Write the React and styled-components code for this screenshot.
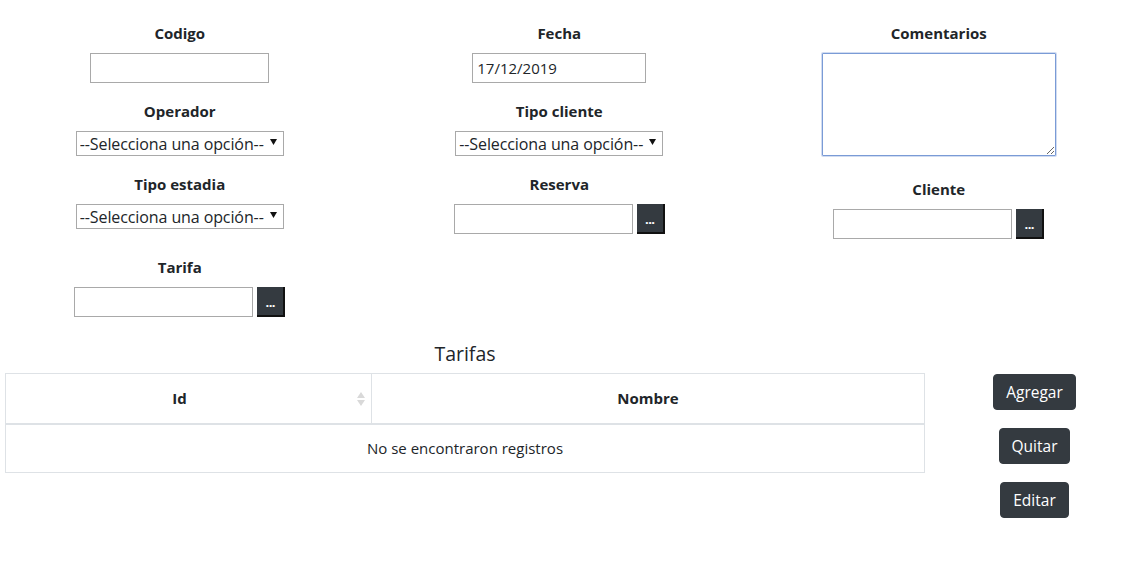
import React from "react";
import styled, { createGlobalStyle } from "styled-components";

const Global = createGlobalStyle`
  * { box-sizing: border-box; }
  body {
    margin: 0;
    background: #fff;
    color: #212529;
    font-family: "Open Sans", "Noto Sans", sans-serif;
    font-size: 15px;
  }
`;

const Page = styled.div`
  width: 1122px;
  padding-top: 21px;
`;

const FormGrid = styled.div`
  display: grid;
  grid-template-columns: repeat(3, 379.5px);
  margin-left: -10px;
`;

const Column = styled.div`
  display: flex;
  flex-direction: column;
  align-items: center;
`;

const Field = styled.div`
  display: flex;
  flex-direction: column;
  align-items: center;
  margin-top: ${(p) => p.$mt || 0}px;
`;

const Label = styled.label`
  font-weight: 700;
  font-size: 15px;
  line-height: 24px;
  margin-bottom: 8px;
`;

const TextInput = styled.input`
  width: ${(p) => p.$w || 179}px;
  height: 30px;
  border: 1px solid #a9a9a9;
  padding: 0 4px;
  font-family: inherit;
  font-size: 15px;
  color: #212529;
  background: #fff;
  outline: none;
`;

const SelectWrap = styled.div`
  position: relative;
  width: 208px;
  height: 25px;
`;

const Select = styled.select`
  appearance: none;
  width: 100%;
  height: 100%;
  border: 1px solid #a9a9a9;
  border-radius: 0;
  background: #fff;
  padding: 0 18px 0 3px;
  font-family: inherit;
  font-size: 16px;
  letter-spacing: -0.1px;
  color: #212529;
  outline: none;
`;

const Arrow = styled.svg`
  position: absolute;
  right: 7px;
  top: 8px;
  pointer-events: none;
`;

const TextArea = styled.textarea`
  width: 234px;
  height: 103px;
  border: 1px solid #7a9bd6;
  box-shadow: 0 0 0 1px rgba(122, 155, 214, 0.35);
  border-radius: 1px;
  font-family: inherit;
  font-size: 15px;
  padding: 2px 3px;
  outline: none;
  resize: both;
`;

const InputGroup = styled.div`
  display: flex;
  align-items: stretch;
  gap: 4px;
`;

const DotsButton = styled.button`
  width: 28px;
  height: 30px;
  background: #343a40;
  color: #fff;
  border: none;
  border-right: 2px solid #111;
  border-bottom: 2px solid #111;
  padding: 0;
  font-family: inherit;
  font-size: 13px;
  font-weight: 700;
  line-height: 1;
  display: flex;
  align-items: flex-end;
  justify-content: center;
  padding-bottom: 6px;
  letter-spacing: -0.5px;
`;

const TableSection = styled.div`
  display: flex;
  margin-top: 25px;
`;

const TableWrap = styled.div`
  margin-left: 5px;
  width: 920px;
`;

const Title = styled.h3`
  margin: 0 0 7px;
  font-size: 19.5px;
  font-weight: 400;
  line-height: 24px;
  text-align: center;
`;

const Table = styled.table`
  width: 100%;
  border-collapse: collapse;
  border: 1px solid #dee2e6;
`;

const Th = styled.th`
  position: relative;
  height: 50px;
  padding: 0 ${(p) => (p.$sortable ? 30 : 12)}px 0 12px;
  font-weight: 700;
  font-size: 15px;
  text-align: center;
  border-bottom: 2px solid #dee2e6;
  border-left: 1px solid #dee2e6;
  width: ${(p) => p.$w || "auto"};
`;

const SortIcon = styled.svg`
  position: absolute;
  right: 6px;
  top: 18px;
`;

const Td = styled.td`
  height: 49px;
  text-align: center;
  font-size: 15px;
  padding: 0 12px;
`;

const ButtonColumn = styled.div`
  width: 175px;
  margin-left: 22px;
  padding-top: 32px;
  display: flex;
  flex-direction: column;
  align-items: center;
  gap: 18px;
`;

const DarkButton = styled.button`
  background: #343a40;
  color: #fff;
  border: 1px solid #343a40;
  border-radius: 4px;
  padding: 0 12px;
  height: 36px;
  font-family: inherit;
  font-size: 15.5px;
  line-height: 24px;
`;

const SelectField = ({ label, mt }) => (
  <Field $mt={mt}>
    <Label>{label}</Label>
    <SelectWrap>
      <Select defaultValue="">
        <option value="">--Selecciona una opción--</option>
      </Select>
      <Arrow width="7" height="6" viewBox="0 0 7 6">
        <path d="M0 0 H7 L3.5 6 Z" fill="#111" />
      </Arrow>
    </SelectWrap>
  </Field>
);

const LookupField = ({ label, mt }) => (
  <Field $mt={mt}>
    <Label>{label}</Label>
    <InputGroup>
      <TextInput />
      <DotsButton>...</DotsButton>
    </InputGroup>
  </Field>
);

export default function App() {
  return (
    <>
      <Global />
      <Page>
        <FormGrid>
          <Column>
            <Field>
              <Label>Codigo</Label>
              <TextInput />
            </Field>
            <SelectField label="Operador" mt={16} />
            <SelectField label="Tipo estadia" mt={16} />
            <LookupField label="Tarifa" mt={26} />
          </Column>
          <Column>
            <Field>
              <Label>Fecha</Label>
              <TextInput $w={174} defaultValue="17/12/2019" />
            </Field>
            <SelectField label="Tipo cliente" mt={16} />
            <LookupField label="Reserva" mt={16} />
          </Column>
          <Column>
            <Field>
              <Label>Comentarios</Label>
              <TextArea autoFocus />
            </Field>
            <LookupField label="Cliente" mt={21} />
          </Column>
        </FormGrid>

        <TableSection>
          <TableWrap>
            <Title>Tarifas</Title>
            <Table>
              <thead>
                <tr>
                  <Th $sortable $w="366px">
                    Id
                    <SortIcon width="8" height="14" viewBox="0 0 8 14">
                      <path d="M4 0 L8 6 H0 Z" fill="#d9d9d9" />
                      <path d="M0 8 H8 L4 14 Z" fill="#d9d9d9" />
                    </SortIcon>
                  </Th>
                  <Th>Nombre</Th>
                </tr>
              </thead>
              <tbody>
                <tr>
                  <Td colSpan={2}>No se encontraron registros</Td>
                </tr>
              </tbody>
            </Table>
          </TableWrap>
          <ButtonColumn>
            <DarkButton>Agregar</DarkButton>
            <DarkButton>Quitar</DarkButton>
            <DarkButton>Editar</DarkButton>
          </ButtonColumn>
        </TableSection>
      </Page>
    </>
  );
}
